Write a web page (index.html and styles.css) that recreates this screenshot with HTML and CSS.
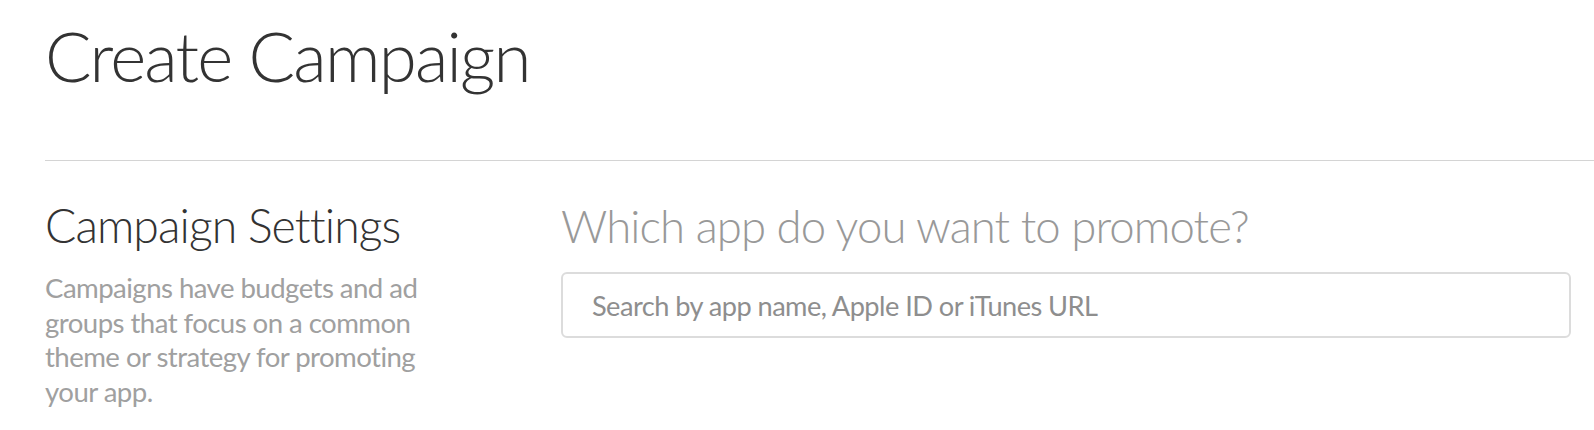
FILE: index.html
```html
<!DOCTYPE html>
<html lang="en">
<head>
    <meta charset="UTF-8">
    <title>Create Campaign</title>
    <link rel="stylesheet" href="styles.css">
</head>
<body>
    <div class="page">
        <h1 class="page-title">Create Campaign</h1>

        <div class="section">
            <div class="section-info">
                <h2>Campaign Settings</h2>
                <p>Campaigns have budgets and ad groups that focus on a common theme or strategy for promoting your app.</p>
            </div>

            <div class="section-body">
                <h3>Which app do you want to promote?</h3>
                <input type="text" class="app-search" placeholder="Search by app name, Apple ID or iTunes URL">
            </div>
        </div>
    </div>
</body>
</html>
```

FILE: styles.css
```css
* {
    margin: 0;
    padding: 0;
    box-sizing: border-box;
}

body {
    font-family: 'Lato', 'Open Sans', sans-serif;
    font-weight: 300;
    background: white;
    color: #333;
}

.page {
    padding-left: 45px;
}

.page-title {
    font-size: 69px;
    font-weight: 300;
    letter-spacing: -0.026em;
    color: #333;
    line-height: 1;
    padding-top: 21px;
    height: 161px;
    border-bottom: 1px solid #d4d4d4;
}

.section {
    display: flex;
    padding-top: 37px;
}

.section-info {
    width: 516px;
    flex-shrink: 0;
}

.section-info h2 {
    font-size: 46.4px;
    font-weight: 300;
    letter-spacing: -0.02em;
    color: #333;
    line-height: 55px;
    margin-bottom: 18px;
}

.section-info p {
    font-size: 27.6px;
    font-weight: 400;
    letter-spacing: -0.02em;
    color: #a0a0a0;
    line-height: 34.5px;
    width: 400px;
}

.section-body {
    flex: 1;
    padding-right: 23px;
}

.section-body h3 {
    font-size: 45.5px;
    font-weight: 300;
    letter-spacing: -0.02em;
    color: #999;
    line-height: 55px;
    margin-bottom: 19px;
}

.app-search {
    display: block;
    width: 100%;
    height: 66px;
    padding: 0 29px;
    font-family: inherit;
    font-size: 27.2px;
    font-weight: 400;
    letter-spacing: -0.02em;
    color: #333;
    border: 2px solid #dcdcdc;
    border-radius: 6px;
    outline: none;
}

.app-search::placeholder {
    color: #8e8e8e;
}
```
